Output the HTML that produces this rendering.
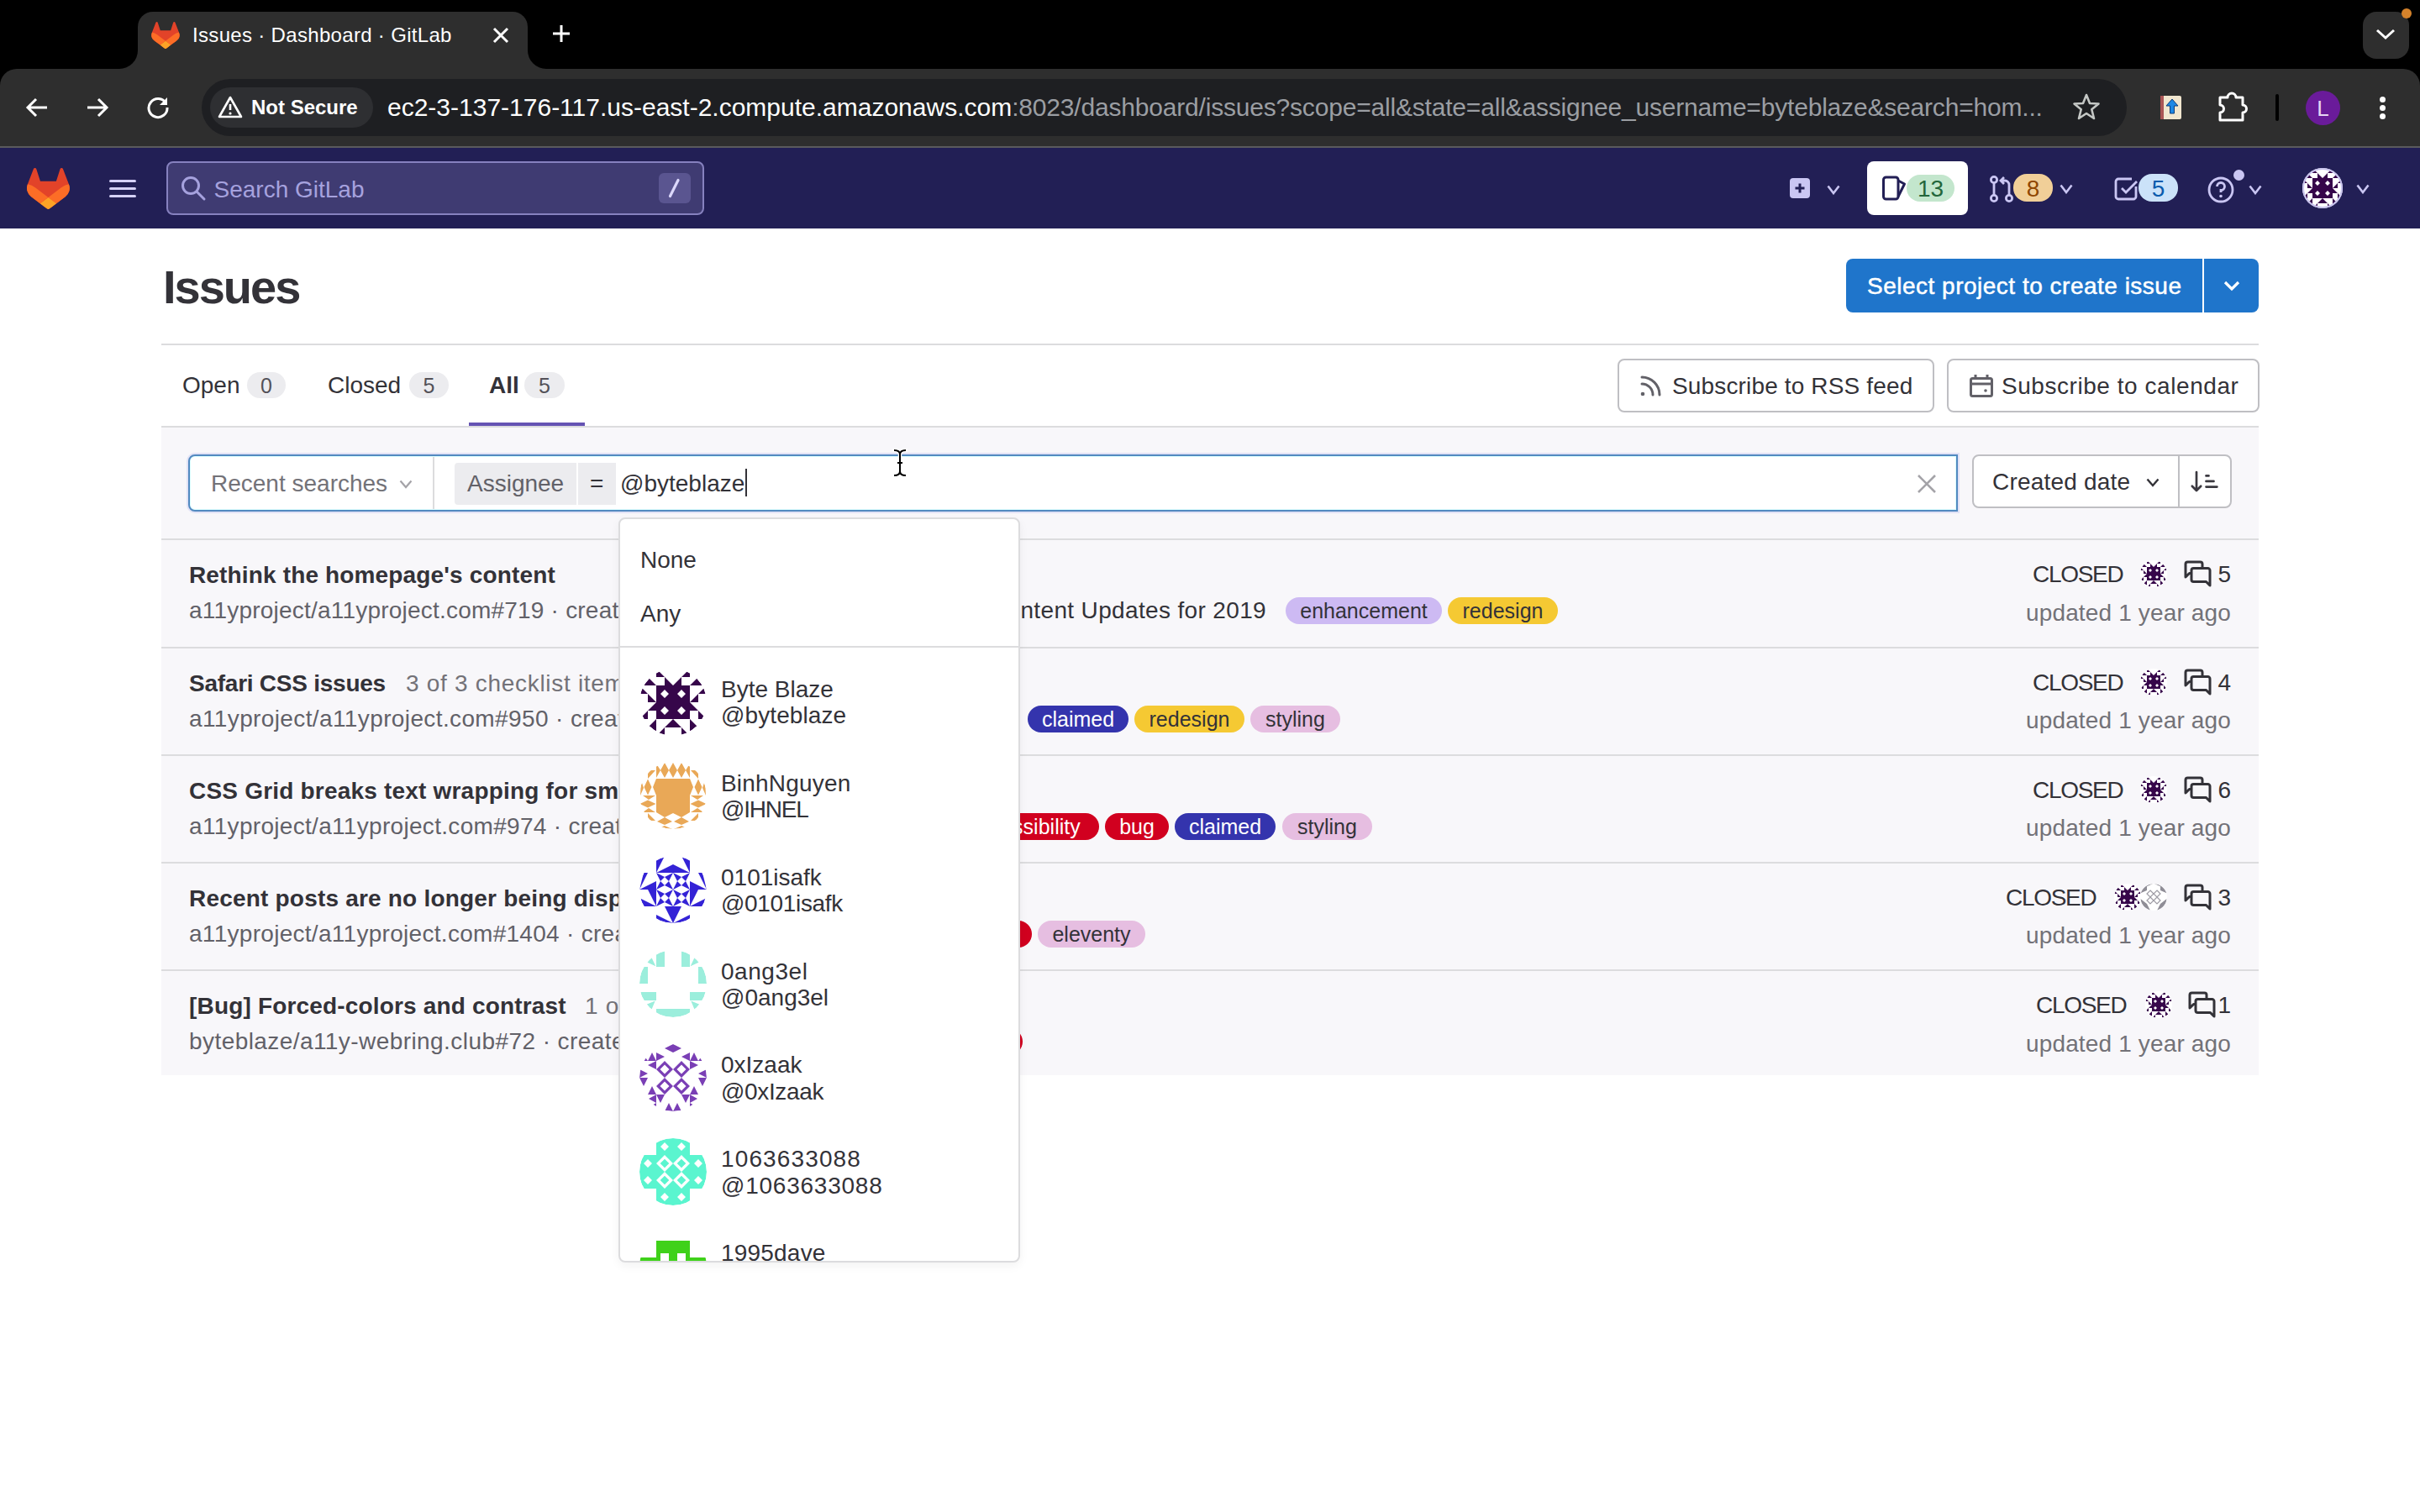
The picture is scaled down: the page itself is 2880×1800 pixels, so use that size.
<!DOCTYPE html>
<html><head><meta charset="utf-8"><title>Issues · Dashboard · GitLab</title>
<style>
html,body{margin:0;padding:0;width:2880px;height:1800px;overflow:hidden;background:#fff;position:relative;font-family:"Liberation Sans", sans-serif;}
.t{position:absolute;white-space:pre;line-height:1;font-family:"Liberation Sans", sans-serif;}
.r{position:absolute;box-sizing:border-box;}
</style></head><body>
<div class="r" style="left:0px;top:0px;width:2880px;height:110px;background:#000;"></div><div class="r" style="left:0px;top:82px;width:2880px;height:92px;background:#2e2e2e;border-radius:20px 20px 0 0;"></div><div class="r" style="left:164px;top:14px;width:464px;height:68px;background:#2e2e2e;border-radius:18px 18px 0 0;"></div><svg class="r" style="left:142px;top:60px;" width="22" height="22" viewBox="0 0 22 22"><path d="M22 0 V22 H0 A22 22 0 0 0 22 0Z" fill="#2e2e2e"/></svg><svg class="r" style="left:628px;top:60px;" width="22" height="22" viewBox="0 0 22 22"><path d="M0 0 V22 H22 A22 22 0 0 1 0 0Z" fill="#2e2e2e"/></svg><svg class="r" style="left:180px;top:26px;" width="34" height="32" viewBox="0 0 25 24"><path fill="#E24329" d="m24.507 9.5-.034-.09L21.082.562a.896.896 0 0 0-1.694.091l-2.29 7.01H7.825L5.535.653a.898.898 0 0 0-1.694-.09L.451 9.411.416 9.5a6.297 6.297 0 0 0 2.09 7.278l.012.01.03.022 5.16 3.867 2.56 1.935 1.554 1.176a1.051 1.051 0 0 0 1.268 0l1.555-1.176 2.56-1.935 5.197-3.89.014-.01A6.297 6.297 0 0 0 24.507 9.5Z"/><path fill="#FC6D26" d="m24.507 9.5-.034-.09a11.44 11.44 0 0 0-4.56 2.051l-7.447 5.632 4.742 3.584 5.197-3.89.014-.01A6.297 6.297 0 0 0 24.507 9.5Z"/><path fill="#FCA326" d="m7.707 20.677 2.56 1.935 1.555 1.176a1.051 1.051 0 0 0 1.268 0l1.555-1.176 2.56-1.935-4.743-3.584-4.755 3.584Z"/><path fill="#FC6D26" d="M5.01 11.461a11.43 11.43 0 0 0-4.56-2.05L.416 9.5a6.297 6.297 0 0 0 2.09 7.278l.012.01.03.022 5.16 3.867 4.745-3.584-7.444-5.632Z"/></svg><div class="t" style="left:229px;top:29.68px;font-size:24px;color:#ffffff;font-weight:400;letter-spacing:0.32px;">Issues · Dashboard · GitLab</div><svg class="r" style="left:586px;top:32px;" width="20" height="20" viewBox="0 0 20 20"><path d="M2 2 L18 18 M18 2 L2 18" stroke="#fff" stroke-width="3"/></svg><svg class="r" style="left:657px;top:29px;" width="22" height="22" viewBox="0 0 22 22"><path d="M11 1 V21 M1 11 H21" stroke="#fff" stroke-width="3"/></svg><div class="r" style="left:2812px;top:14px;width:55px;height:56px;background:#2e2e2e;border-radius:16px;"></div><svg class="r" style="left:2826px;top:32px;" width="26" height="16" viewBox="0 0 26 16"><path d="M3 4 L13 13 L23 4" stroke="#fff" stroke-width="3" fill="none"/></svg><div class="r" style="left:2858px;top:10px;width:12px;height:12px;border-radius:6px;background:#d4822b"></div><svg class="r" style="left:30px;top:114px;" width="28" height="28" viewBox="0 0 28 28"><path d="M26 14 H4 M13 4 L3 14 L13 24" stroke="#fff" stroke-width="3" fill="none"/></svg><svg class="r" style="left:102px;top:114px;" width="28" height="28" viewBox="0 0 28 28"><path d="M2 14 H24 M15 4 L25 14 L15 24" stroke="#fff" stroke-width="3" fill="none"/></svg><svg class="r" style="left:174px;top:114px;" width="28" height="28" viewBox="0 0 28 28"><path d="M23.5 9 A11 11 0 1 0 25 14" stroke="#fff" stroke-width="3" fill="none"/><path d="M25 2 V11 H16 Z" fill="#fff"/></svg><div class="r" style="left:240px;top:94px;width:2291px;height:68px;background:#1e1f22;border-radius:34px;"></div><div class="r" style="left:250px;top:104px;width:194px;height:48px;background:#2e2f32;border-radius:24px;"></div><svg class="r" style="left:259px;top:114px;" width="30" height="27" viewBox="0 0 30 27"><path d="M15 2 L28 25 H2 Z" stroke="#fff" stroke-width="2.6" fill="none" stroke-linejoin="round"/><path d="M15 10 V17" stroke="#fff" stroke-width="2.6"/><circle cx="15" cy="21" r="1.6" fill="#fff"/></svg><div class="t" style="left:299px;top:115.68px;font-size:24px;color:#ffffff;font-weight:700;">Not Secure</div><div class="t" style="left:461px;top:112.61px;font-size:30px;color:#ffffff;font-weight:400;">ec2-3-137-176-117.us-east-2.compute.amazonaws.com<span style="color:#9b9ea3;letter-spacing:-0.19px">:8023/dashboard/issues?scope=all&amp;state=all&amp;assignee_username=byteblaze&amp;search=hom...</span></div><svg class="r" style="left:2466px;top:110px;" width="34" height="34" viewBox="0 0 34 34"><path d="M17 3 L21 13 L31.5 13.5 L23.3 20.3 L26 31 L17 25 L8 31 L10.7 20.3 L2.5 13.5 L13 13 Z" stroke="#c4c7c5" stroke-width="2.6" fill="none" stroke-linejoin="round"/></svg><div class="r" style="left:2571px;top:114px;width:25px;height:28px;background:#f1e6cf;border-radius:2px;"></div><div class="r" style="left:2571px;top:114px;width:4px;height:28px;background:#a55;"></div><svg class="r" style="left:2575px;top:116px;" width="20" height="22" viewBox="0 0 20 22"><path d="M10 2 L17 10 H12.5 V19 H7.5 V10 H3 Z" fill="#1e88e5" stroke="#0d3c7a" stroke-width="1"/></svg><svg class="r" style="left:2638px;top:108px;" width="40" height="38" viewBox="0 0 40 38"><path d="M4 8 H13 A5 5 0 0 1 23 8 H31 V17 A4.5 4.5 0 0 1 31 26 V35 H4 V26 A4.5 4.5 0 0 0 4 17 Z" stroke="#fff" stroke-width="3" fill="none" stroke-linejoin="round"/></svg><div class="r" style="left:2708px;top:112px;width:4px;height:32px;background:#000;border-radius:2px;"></div><div class="r" style="left:2744px;top:108px;width:41px;height:41px;border-radius:50%;background:#6a1b9a"></div><div class="t" style="left:2764.5px;top:115.99px;font-size:26px;color:#e6d6f3;font-weight:400;transform:translateX(-50%);">L</div><div class="r" style="left:2832px;top:115px;width:7px;height:7px;border-radius:50%;background:#fff"></div><div class="r" style="left:2832px;top:125px;width:7px;height:7px;border-radius:50%;background:#fff"></div><div class="r" style="left:2832px;top:135px;width:7px;height:7px;border-radius:50%;background:#fff"></div><div class="r" style="left:0px;top:174px;width:2880px;height:2px;background:#5a5a5c;"></div><div class="r" style="left:0px;top:176px;width:2880px;height:96px;background:#221f55;"></div><svg class="r" style="left:32px;top:200px;" width="51" height="49" viewBox="0 0 25 24"><path fill="#E24329" d="m24.507 9.5-.034-.09L21.082.562a.896.896 0 0 0-1.694.091l-2.29 7.01H7.825L5.535.653a.898.898 0 0 0-1.694-.09L.451 9.411.416 9.5a6.297 6.297 0 0 0 2.09 7.278l.012.01.03.022 5.16 3.867 2.56 1.935 1.554 1.176a1.051 1.051 0 0 0 1.268 0l1.555-1.176 2.56-1.935 5.197-3.89.014-.01A6.297 6.297 0 0 0 24.507 9.5Z"/><path fill="#FC6D26" d="m24.507 9.5-.034-.09a11.44 11.44 0 0 0-4.56 2.051l-7.447 5.632 4.742 3.584 5.197-3.89.014-.01A6.297 6.297 0 0 0 24.507 9.5Z"/><path fill="#FCA326" d="m7.707 20.677 2.56 1.935 1.555 1.176a1.051 1.051 0 0 0 1.268 0l1.555-1.176 2.56-1.935-4.743-3.584-4.755 3.584Z"/><path fill="#FC6D26" d="M5.01 11.461a11.43 11.43 0 0 0-4.56-2.05L.416 9.5a6.297 6.297 0 0 0 2.09 7.278l.012.01.03.022 5.16 3.867 4.745-3.584-7.444-5.632Z"/></svg><div class="r" style="left:130px;top:214px;width:32px;height:3px;background:#d5d1f7;border-radius:2px;"></div><div class="r" style="left:130px;top:223px;width:32px;height:3px;background:#d5d1f7;border-radius:2px;"></div><div class="r" style="left:130px;top:232px;width:32px;height:3px;background:#d5d1f7;border-radius:2px;"></div><div class="r" style="left:198px;top:192px;width:640px;height:64px;background:#3f3b72;border:2px solid #8681bf;border-radius:8px;"></div><svg class="r" style="left:214px;top:208px;" width="32" height="32" viewBox="0 0 32 32"><circle cx="13" cy="13" r="9.5" stroke="#a6a2de" stroke-width="3" fill="none"/><path d="M20 20 L29 29" stroke="#a6a2de" stroke-width="3" stroke-linecap="round"/></svg><div class="t" style="left:254.5px;top:212.30px;font-size:28px;color:#a6a2de;font-weight:400;">Search GitLab</div><div class="r" style="left:784px;top:206px;width:38px;height:36px;background:#5a5590;border-radius:6px;"></div><svg class="r" style="left:790px;top:208px;" width="24" height="32" viewBox="0 0 24 32"><path d="M17 6.5 L7.5 25.5" stroke="#dcd8fb" stroke-width="3.2" stroke-linecap="round"/></svg><div class="r" style="left:2130px;top:212px;width:24px;height:24px;background:#cac6f3;border-radius:4px;"></div><svg class="r" style="left:2130px;top:212px;" width="24" height="24" viewBox="0 0 24 24"><path d="M12 6.5 V17.5 M6.5 12 H17.5" stroke="#221f55" stroke-width="3"/></svg><svg class="r" style="left:2174px;top:220px;" width="16" height="12" viewBox="0 0 16 12"><path d="M1.5 1.5 L8.0 10 L14.5 1.5" stroke="#cac6f3" stroke-width="2.6" fill="none"/></svg><div class="r" style="left:2222px;top:192px;width:120px;height:64px;background:#ffffff;border-radius:8px;"></div><svg class="r" style="left:2238px;top:208px;" width="32" height="32" viewBox="0 0 32 32"><rect x="3.5" y="3" width="17.5" height="26" rx="3" stroke="#221f55" stroke-width="3" fill="none"/><path d="M21 7 L28.5 11 L21 26" stroke="#221f55" stroke-width="3" fill="none" stroke-linejoin="round"/></svg><div class="r" style="left:2269px;top:208px;width:57px;height:32px;background:#c3e6cd;border-radius:16px;"></div><div class="t" style="left:2297.5px;top:211.30px;font-size:28px;color:#24663b;font-weight:400;transform:translateX(-50%);">13</div><svg class="r" style="left:2367px;top:209px;" width="34" height="32" viewBox="0 0 34 32"><circle cx="6" cy="5" r="3.6" stroke="#cac6f3" stroke-width="2.8" fill="none"/><circle cx="6" cy="27" r="3.6" stroke="#cac6f3" stroke-width="2.8" fill="none"/><path d="M6 9 V23" stroke="#cac6f3" stroke-width="2.8"/><circle cx="24" cy="27" r="3.6" stroke="#cac6f3" stroke-width="2.8" fill="none"/><path d="M24 23 V11 A5 5 0 0 0 19 6 H15 M18 2 L14 6 L18 10" stroke="#cac6f3" stroke-width="2.8" fill="none"/></svg><div class="r" style="left:2396px;top:207px;width:47px;height:33px;background:#f1cf98;border-radius:16px;"></div><div class="t" style="left:2419.5px;top:211.30px;font-size:28px;color:#8f4700;font-weight:400;transform:translateX(-50%);">8</div><svg class="r" style="left:2451px;top:219px;" width="16" height="12" viewBox="0 0 16 12"><path d="M1.5 1.5 L8.0 10 L14.5 1.5" stroke="#cac6f3" stroke-width="2.6" fill="none"/></svg><svg class="r" style="left:2515px;top:208px;" width="32" height="32" viewBox="0 0 32 32"><path d="M27 14 V26 A3 3 0 0 1 24 29 H6 A3 3 0 0 1 3 26 V8 A3 3 0 0 1 6 5 H22" stroke="#cac6f3" stroke-width="2.8" fill="none"/><path d="M10 16 L15 21 L28 8" stroke="#cac6f3" stroke-width="2.8" fill="none"/></svg><div class="r" style="left:2545px;top:207px;width:47px;height:33px;background:#cbe2f9;border-radius:16px;"></div><div class="t" style="left:2568.5px;top:211.30px;font-size:28px;color:#0b5cad;font-weight:400;transform:translateX(-50%);">5</div><svg class="r" style="left:2626px;top:208px;" width="36" height="34" viewBox="0 0 36 34"><circle cx="17" cy="18" r="14" stroke="#cac6f3" stroke-width="2.8" fill="none"/><path d="M12.5 14 A4.5 4.5 0 1 1 17 18.5 V21" stroke="#cac6f3" stroke-width="2.8" fill="none"/><circle cx="17" cy="25.5" r="1.8" fill="#cac6f3"/></svg><div class="r" style="left:2656px;top:200px;width:17px;height:17px;border-radius:50%;background:#cac6f3;border:2px solid #221f55"></div><svg class="r" style="left:2676px;top:220px;" width="16" height="12" viewBox="0 0 16 12"><path d="M1.5 1.5 L8.0 10 L14.5 1.5" stroke="#cac6f3" stroke-width="2.6" fill="none"/></svg><svg width="0" height="0" style="position:absolute"><defs>
<symbol id="bb" viewBox="0 0 80 80"><clipPath id="cc"><circle cx="40" cy="40" r="40"/></clipPath><g clip-path="url(#cc)" fill="#36064a">
<path d="M0 20 L10 10 L20 20Z M60 20 L70 10 L80 20Z"/>
<path d="M20 0 L30 10 L20 10Z M30 10 L40 20 L30 20Z M60 0 L50 10 L60 10Z M50 10 L40 20 L50 20Z"/>
<path d="M0 20 L10 30 L0 30Z M10 30 L20 40 L10 40Z M80 20 L70 30 L80 30Z M70 30 L60 40 L70 40Z"/>
<path d="M10 50 L0 60 L10 60Z M20 40 L10 50 L20 50Z M70 50 L80 60 L70 60Z M60 40 L70 50 L60 50Z"/>
<path fill-rule="evenodd" d="M20 20 H60 V60 H20Z M30 25 L35 30 L30 35 L25 30Z M50 25 L55 30 L50 35 L45 30Z M30 45 L35 50 L30 55 L25 50Z M50 45 L55 50 L50 55 L45 50Z"/>
<path d="M20 60 L10 70 L20 80Z M60 60 L70 70 L60 80Z"/>
<path d="M40 60 L30 70 L40 70Z M30 70 L20 80 L30 80Z M40 60 L50 70 L40 70Z M50 70 L60 80 L50 80Z"/>
</g></symbol>
</defs></svg><div class="r" style="left:2740px;top:200px;width:48px;height:48px;border-radius:50%;background:#fff;overflow:hidden;"><svg width="48" height="48" style="display:block"><use href="#bb"/></svg></div><div class="r" style="left:2740px;top:200px;width:48px;height:48px;border-radius:50%;border:2px solid #c9c4ee"></div><svg class="r" style="left:2804px;top:219px;" width="16" height="12" viewBox="0 0 16 12"><path d="M1.5 1.5 L8.0 10 L14.5 1.5" stroke="#cac6f3" stroke-width="2.6" fill="none"/></svg><div class="t" style="left:194px;top:313.60px;font-size:56px;color:#333238;font-weight:700;letter-spacing:-2px;">Issues</div><div class="r" style="left:2197px;top:308px;width:491px;height:64px;background:#1f75cb;border-radius:8px;"></div><div class="r" style="left:2621px;top:308px;width:2px;height:64px;background:#ffffff;"></div><div class="t" style="left:2222px;top:327.30px;font-size:28px;color:#ffffff;font-weight:400;letter-spacing:0.5px;-webkit-text-stroke:0.5px #fff;">Select project to create issue</div><svg class="r" style="left:2645px;top:333px;" width="22" height="14" viewBox="0 0 22 14"><path d="M3 3 L11 11 L19 3" stroke="#fff" stroke-width="3.2" fill="none"/></svg><div class="r" style="left:192px;top:409px;width:2496px;height:2px;background:#dcdcde;"></div><div class="t" style="left:217px;top:445.30px;font-size:28px;color:#333238;font-weight:400;">Open</div><div class="r" style="left:294px;top:443px;width:46px;height:31px;background:#ececef;border-radius:16px;"></div><div class="t" style="left:317px;top:446.84px;font-size:25px;color:#535158;font-weight:400;transform:translateX(-50%);">0</div><div class="t" style="left:390px;top:445.30px;font-size:28px;color:#333238;font-weight:400;">Closed</div><div class="r" style="left:487px;top:443px;width:47px;height:31px;background:#ececef;border-radius:16px;"></div><div class="t" style="left:510.5px;top:446.84px;font-size:25px;color:#535158;font-weight:400;transform:translateX(-50%);">5</div><div class="t" style="left:582px;top:445.30px;font-size:28px;color:#333238;font-weight:700;">All</div><div class="r" style="left:624px;top:443px;width:48px;height:31px;background:#ececef;border-radius:16px;"></div><div class="t" style="left:648px;top:446.84px;font-size:25px;color:#535158;font-weight:400;transform:translateX(-50%);">5</div><div class="r" style="left:558px;top:503px;width:138px;height:4px;background:#6553b3;"></div><div class="r" style="left:192px;top:507px;width:2496px;height:2px;background:#dcdcde;"></div><div class="r" style="left:1925px;top:427px;width:377px;height:64px;background:#ffffff;border:2px solid #bfbfc3;border-radius:8px;"></div><svg class="r" style="left:1950px;top:444px;" width="30" height="30" viewBox="0 0 30 30"><path d="M4 5 A21 21 0 0 1 25 26" stroke="#626168" stroke-width="3" fill="none" stroke-linecap="round"/><path d="M4 13 A13 13 0 0 1 17 26" stroke="#626168" stroke-width="3" fill="none" stroke-linecap="round"/><circle cx="5" cy="25" r="2.3" fill="#626168"/></svg><div class="t" style="left:1990px;top:446.30px;font-size:28px;color:#333238;font-weight:400;letter-spacing:0.15px;">Subscribe to RSS feed</div><div class="r" style="left:2317px;top:427px;width:372px;height:64px;background:#ffffff;border:2px solid #bfbfc3;border-radius:8px;"></div><svg class="r" style="left:2342px;top:444px;" width="32" height="32" viewBox="0 0 32 32"><rect x="3.5" y="6.5" width="25" height="21" rx="2" stroke="#626168" stroke-width="3" fill="none"/><path d="M3.5 13 H28.5" stroke="#626168" stroke-width="3"/><path d="M9 2 V8 M23 2 V8" stroke="#626168" stroke-width="3"/><circle cx="21" cy="21" r="1.8" fill="#626168"/></svg><div class="t" style="left:2382px;top:446.30px;font-size:28px;color:#333238;font-weight:400;letter-spacing:0.55px;">Subscribe to calendar</div><div class="r" style="left:192px;top:509px;width:2496px;height:771px;background:#f8f7fa;"></div><div class="r" style="left:192px;top:641px;width:2496px;height:2px;background:#dcdcde;"></div><div class="r" style="left:224px;top:541px;width:2106px;height:68px;background:#ffffff;border:2px solid #5289c0;border-radius:8px 0 0 8px;box-shadow:0 0 0 2px rgba(205,210,242,0.55), inset 0 0 0 1px rgba(215,255,255,0.9);"></div><div class="r" style="left:515px;top:544px;width:2px;height:62px;background:#dcdcde;"></div><div class="t" style="left:251px;top:561.80px;font-size:28px;color:#737278;font-weight:400;">Recent searches</div><svg class="r" style="left:475px;top:571px;" width="16" height="11" viewBox="0 0 16 11"><path d="M1.5 1.5 L8.0 9 L14.5 1.5" stroke="#a4a3a8" stroke-width="2.2" fill="none"/></svg><div class="r" style="left:541px;top:551px;width:145px;height:50px;background:#ececef;border-radius:4px 0 0 4px;"></div><div class="t" style="left:556px;top:561.80px;font-size:28px;color:#626168;font-weight:400;">Assignee</div><div class="r" style="left:688px;top:551px;width:45px;height:50px;background:#ececef;"></div><div class="t" style="left:702px;top:561.80px;font-size:28px;color:#333238;font-weight:400;">=</div><div class="t" style="left:738px;top:561.80px;font-size:28px;color:#333238;font-weight:400;">@byteblaze</div><div class="r" style="left:887px;top:558px;width:2px;height:33px;background:#333238;"></div><svg class="r" style="left:2280px;top:563px;" width="26" height="26" viewBox="0 0 26 26"><path d="M3 3 L23 23 M23 3 L3 23" stroke="#a4a3a8" stroke-width="2.6"/></svg><div class="r" style="left:2347px;top:541px;width:309px;height:64px;background:#ffffff;border:2px solid #bfbfc3;border-radius:8px;"></div><div class="r" style="left:2592px;top:543px;width:2px;height:60px;background:#bfbfc3;"></div><div class="t" style="left:2371px;top:560.30px;font-size:28px;color:#333238;font-weight:400;letter-spacing:0.2px;">Created date</div><svg class="r" style="left:2554px;top:569px;" width="16" height="11" viewBox="0 0 16 11"><path d="M1.5 1.5 L8.0 9 L14.5 1.5" stroke="#333238" stroke-width="2.4" fill="none"/></svg><svg class="r" style="left:2600px;top:556px;" width="44" height="34" viewBox="0 0 44 34"><g stroke="#3a383f" stroke-width="2.7" fill="none" stroke-linecap="round" stroke-linejoin="round"><path d="M14 6 V27.5 M8.8 22.8 L14 28 L19.2 22.8"/><path d="M25.5 10.4 H28.5 M25.5 16.9 H34.5 M25.5 23.6 H38.4"/></g></svg><div class="r" style="left:192px;top:769.5px;width:2496px;height:2.0px;background:#dcdcde;"></div><div class="r" style="left:192px;top:897.5px;width:2496px;height:2.0px;background:#dcdcde;"></div><div class="r" style="left:192px;top:1025.5px;width:2496px;height:2.0px;background:#dcdcde;"></div><div class="r" style="left:192px;top:1154px;width:2496px;height:2px;background:#dcdcde;"></div><div class="t" style="left:225px;top:671.30px;font-size:28px;color:#333238;font-weight:700;letter-spacing:0.15px;">Rethink the homepage&#39;s content</div><div class="t" style="left:225px;top:713.30px;font-size:28px;color:#626168;font-weight:400;letter-spacing:0.21px;">a11yproject/a11yproject.com#719 · created 1 year ago by Byte Blaze</div><div class="t" style="left:225px;top:799.80px;font-size:28px;color:#333238;font-weight:700;letter-spacing:-0.25px;">Safari CSS issues</div><div class="t" style="left:483px;top:799.80px;font-size:28px;color:#737278;font-weight:400;letter-spacing:0.7px;">3 of 3 checklist items completed</div><div class="t" style="left:225px;top:841.80px;font-size:28px;color:#626168;font-weight:400;letter-spacing:0.38px;">a11yproject/a11yproject.com#950 · created 1 year ago by Byte Blaze</div><div class="t" style="left:225px;top:927.80px;font-size:28px;color:#333238;font-weight:700;letter-spacing:0.2px;">CSS Grid breaks text wrapping for small screens</div><div class="t" style="left:225px;top:969.80px;font-size:28px;color:#626168;font-weight:400;letter-spacing:0.31px;">a11yproject/a11yproject.com#974 · created 1 year ago by Byte Blaze</div><div class="t" style="left:225px;top:1055.80px;font-size:28px;color:#333238;font-weight:700;letter-spacing:0.2px;">Recent posts are no longer being displayed</div><div class="t" style="left:225px;top:1097.80px;font-size:28px;color:#626168;font-weight:400;letter-spacing:0.29px;">a11yproject/a11yproject.com#1404 · created 1 year ago by Byte Blaze</div><div class="t" style="left:225px;top:1184.30px;font-size:28px;color:#333238;font-weight:700;letter-spacing:0.17px;">[Bug] Forced-colors and contrast</div><div class="t" style="left:696px;top:1184.30px;font-size:28px;color:#737278;font-weight:400;letter-spacing:0.7px;">1 of 3 checklist items completed</div><div class="t" style="left:225px;top:1226.30px;font-size:28px;color:#626168;font-weight:400;letter-spacing:0.43px;">byteblaze/a11y-webring.club#72 · created 1 year ago by Byte Blaze</div><div class="t" style="right:1373px;top:713.30px;font-size:28px;color:#333238;font-weight:400;letter-spacing:0.35px;">Content Updates for 2019</div><div class="r" style="left:1530px;top:711px;width:186px;height:32px;border-radius:16px;background:#cdbaf3;"></div><div class="t" style="left:1623.0px;top:715.34px;font-size:25px;color:#333238;font-weight:400;transform:translateX(-50%);">enhancement</div><div class="r" style="left:1723px;top:711px;width:131px;height:32px;border-radius:16px;background:#f5c933;"></div><div class="t" style="left:1788.5px;top:715.34px;font-size:25px;color:#333238;font-weight:400;transform:translateX(-50%);">redesign</div><div class="r" style="left:1223px;top:839.5px;width:120px;height:32px;border-radius:16px;background:#3434ad;"></div><div class="t" style="left:1283.0px;top:843.84px;font-size:25px;color:#ffffff;font-weight:400;transform:translateX(-50%);">claimed</div><div class="r" style="left:1350px;top:839.5px;width:131px;height:32px;border-radius:16px;background:#f5c933;"></div><div class="t" style="left:1415.5px;top:843.84px;font-size:25px;color:#333238;font-weight:400;transform:translateX(-50%);">redesign</div><div class="r" style="left:1488px;top:839.5px;width:107px;height:32px;border-radius:16px;background:#e6bee1;"></div><div class="t" style="left:1541.5px;top:843.84px;font-size:25px;color:#333238;font-weight:400;transform:translateX(-50%);">styling</div><div class="r" style="left:1130px;top:967.5px;width:178px;height:32px;border-radius:16px;background:#d1001f;"></div><div class="t" style="left:1219.0px;top:971.84px;font-size:25px;color:#ffffff;font-weight:400;transform:translateX(-50%);">accessibility</div><div class="r" style="left:1315px;top:967.5px;width:76px;height:32px;border-radius:16px;background:#d1001f;"></div><div class="t" style="left:1353.0px;top:971.84px;font-size:25px;color:#ffffff;font-weight:400;transform:translateX(-50%);">bug</div><div class="r" style="left:1398px;top:967.5px;width:120px;height:32px;border-radius:16px;background:#3434ad;"></div><div class="t" style="left:1458.0px;top:971.84px;font-size:25px;color:#ffffff;font-weight:400;transform:translateX(-50%);">claimed</div><div class="r" style="left:1526px;top:967.5px;width:107px;height:32px;border-radius:16px;background:#e6bee1;"></div><div class="t" style="left:1579.5px;top:971.84px;font-size:25px;color:#333238;font-weight:400;transform:translateX(-50%);">styling</div><div class="r" style="left:1100px;top:1095.5px;width:128px;height:32px;border-radius:16px;background:#d1001f;"></div><div class="t" style="left:1164.0px;top:1099.84px;font-size:25px;color:#ffffff;font-weight:400;transform:translateX(-50%);">bug</div><div class="r" style="left:1235px;top:1095.5px;width:128px;height:32px;border-radius:16px;background:#e6bee1;"></div><div class="t" style="left:1299.0px;top:1099.84px;font-size:25px;color:#333238;font-weight:400;transform:translateX(-50%);">eleventy</div><div class="r" style="left:1100px;top:1224px;width:117px;height:32px;border-radius:16px;background:#d1001f;"></div><div class="t" style="left:1158.5px;top:1228.34px;font-size:25px;color:#ffffff;font-weight:400;transform:translateX(-50%);">bug</div><div class="t" style="left:2419px;top:670.30px;font-size:28px;color:#333238;font-weight:400;letter-spacing:-1.3px;">CLOSED</div><div class="r" style="left:2547px;top:667px;width:32px;height:32px;border-radius:50%;background:#fff;overflow:hidden;"><svg width="32" height="32" style="display:block"><use href="#bb"/></svg></div><svg class="r" style="left:2599px;top:667px;" width="34" height="32" viewBox="0 0 34 32"><path d="M22 9 V4.5 A2.5 2.5 0 0 0 19.5 2 H4.5 A2.5 2.5 0 0 0 2 4.5 V20 L6.5 15.5 H9" stroke="#333238" stroke-width="3" fill="none" stroke-linejoin="round"/><path d="M11.5 9.5 H28.5 A2.5 2.5 0 0 1 31 12 V30 L26.5 25.5 H11.5 A2.5 2.5 0 0 1 9 23 V12 A2.5 2.5 0 0 1 11.5 9.5Z" stroke="#333238" stroke-width="3" fill="none" stroke-linejoin="round"/></svg><div class="t" style="right:225px;top:670.30px;font-size:28px;color:#333238;font-weight:400;">5</div><div class="t" style="right:225px;top:715.80px;font-size:28px;color:#737278;font-weight:400;letter-spacing:0.15px;">updated 1 year ago</div><div class="t" style="left:2419px;top:798.80px;font-size:28px;color:#333238;font-weight:400;letter-spacing:-1.3px;">CLOSED</div><div class="r" style="left:2547px;top:795.5px;width:32px;height:32px;border-radius:50%;background:#fff;overflow:hidden;"><svg width="32" height="32" style="display:block"><use href="#bb"/></svg></div><svg class="r" style="left:2599px;top:795.5px;" width="34" height="32" viewBox="0 0 34 32"><path d="M22 9 V4.5 A2.5 2.5 0 0 0 19.5 2 H4.5 A2.5 2.5 0 0 0 2 4.5 V20 L6.5 15.5 H9" stroke="#333238" stroke-width="3" fill="none" stroke-linejoin="round"/><path d="M11.5 9.5 H28.5 A2.5 2.5 0 0 1 31 12 V30 L26.5 25.5 H11.5 A2.5 2.5 0 0 1 9 23 V12 A2.5 2.5 0 0 1 11.5 9.5Z" stroke="#333238" stroke-width="3" fill="none" stroke-linejoin="round"/></svg><div class="t" style="right:225px;top:798.80px;font-size:28px;color:#333238;font-weight:400;">4</div><div class="t" style="right:225px;top:844.30px;font-size:28px;color:#737278;font-weight:400;letter-spacing:0.15px;">updated 1 year ago</div><div class="t" style="left:2419px;top:926.80px;font-size:28px;color:#333238;font-weight:400;letter-spacing:-1.3px;">CLOSED</div><div class="r" style="left:2547px;top:923.5px;width:32px;height:32px;border-radius:50%;background:#fff;overflow:hidden;"><svg width="32" height="32" style="display:block"><use href="#bb"/></svg></div><svg class="r" style="left:2599px;top:923.5px;" width="34" height="32" viewBox="0 0 34 32"><path d="M22 9 V4.5 A2.5 2.5 0 0 0 19.5 2 H4.5 A2.5 2.5 0 0 0 2 4.5 V20 L6.5 15.5 H9" stroke="#333238" stroke-width="3" fill="none" stroke-linejoin="round"/><path d="M11.5 9.5 H28.5 A2.5 2.5 0 0 1 31 12 V30 L26.5 25.5 H11.5 A2.5 2.5 0 0 1 9 23 V12 A2.5 2.5 0 0 1 11.5 9.5Z" stroke="#333238" stroke-width="3" fill="none" stroke-linejoin="round"/></svg><div class="t" style="right:225px;top:926.80px;font-size:28px;color:#333238;font-weight:400;">6</div><div class="t" style="right:225px;top:972.30px;font-size:28px;color:#737278;font-weight:400;letter-spacing:0.15px;">updated 1 year ago</div><div class="t" style="left:2387px;top:1054.80px;font-size:28px;color:#333238;font-weight:400;letter-spacing:-1.3px;">CLOSED</div><div class="r" style="left:2516px;top:1051.5px;width:32px;height:32px;border-radius:50%;background:#fff;overflow:hidden;"><svg width="32" height="32" style="display:block"><use href="#bb"/></svg></div><div class="r" style="left:2547px;top:1051.5px;width:32px;height:32px;border-radius:50%;background:#fff;overflow:hidden"><svg width="32" height="32" viewBox="0 0 80 80" style="display:block"><path fill="#8f8d96" d="M1 28 L20 20 L20 8 L38 0 A40 40 0 0 0 1 28Z M42 0 L60 8 L60 20 L79 28 A40 40 0 0 0 42 0Z M1 45 L20 60 L30 80 A40 40 0 0 1 1 45Z M79 45 L60 60 L50 80 A40 40 0 0 0 79 45Z"/><path fill="none" stroke="#9d9ba4" stroke-width="3" d="M30 20 L40 30 L30 40 L20 30Z M50 20 L60 30 L50 40 L40 30Z M30 40 L40 50 L30 60 L20 50Z M50 40 L60 50 L50 60 L40 50Z"/></svg></div><svg class="r" style="left:2599px;top:1051.5px;" width="34" height="32" viewBox="0 0 34 32"><path d="M22 9 V4.5 A2.5 2.5 0 0 0 19.5 2 H4.5 A2.5 2.5 0 0 0 2 4.5 V20 L6.5 15.5 H9" stroke="#333238" stroke-width="3" fill="none" stroke-linejoin="round"/><path d="M11.5 9.5 H28.5 A2.5 2.5 0 0 1 31 12 V30 L26.5 25.5 H11.5 A2.5 2.5 0 0 1 9 23 V12 A2.5 2.5 0 0 1 11.5 9.5Z" stroke="#333238" stroke-width="3" fill="none" stroke-linejoin="round"/></svg><div class="t" style="right:225px;top:1054.80px;font-size:28px;color:#333238;font-weight:400;">3</div><div class="t" style="right:225px;top:1100.30px;font-size:28px;color:#737278;font-weight:400;letter-spacing:0.15px;">updated 1 year ago</div><div class="t" style="left:2423px;top:1183.30px;font-size:28px;color:#333238;font-weight:400;letter-spacing:-1.3px;">CLOSED</div><div class="r" style="left:2553px;top:1180px;width:32px;height:32px;border-radius:50%;background:#fff;overflow:hidden;"><svg width="32" height="32" style="display:block"><use href="#bb"/></svg></div><svg class="r" style="left:2604px;top:1180px;" width="34" height="32" viewBox="0 0 34 32"><path d="M22 9 V4.5 A2.5 2.5 0 0 0 19.5 2 H4.5 A2.5 2.5 0 0 0 2 4.5 V20 L6.5 15.5 H9" stroke="#333238" stroke-width="3" fill="none" stroke-linejoin="round"/><path d="M11.5 9.5 H28.5 A2.5 2.5 0 0 1 31 12 V30 L26.5 25.5 H11.5 A2.5 2.5 0 0 1 9 23 V12 A2.5 2.5 0 0 1 11.5 9.5Z" stroke="#333238" stroke-width="3" fill="none" stroke-linejoin="round"/></svg><div class="t" style="right:225px;top:1183.30px;font-size:28px;color:#333238;font-weight:400;">1</div><div class="t" style="right:225px;top:1228.80px;font-size:28px;color:#737278;font-weight:400;letter-spacing:0.15px;">updated 1 year ago</div><div class="r" style="left:736px;top:616px;width:478px;height:887px;background:#fff;border:2px solid #dcdcde;border-radius:8px;box-shadow:0 4px 12px rgba(5,5,6,0.05);overflow:hidden;"><div class="t" style="left:24px;top:34.80px;font-size:28px;color:#333238;letter-spacing:0px">None</div><div class="t" style="left:24px;top:98.80px;font-size:28px;color:#333238;letter-spacing:0px">Any</div><div class="r" style="left:0;top:151px;width:476px;height:2px;background:#dcdcde"></div><div class="r" style="left:23px;top:177.5px;width:80px;height:80px;border-radius:50%;overflow:hidden;background:#fff"><svg width="80" height="80" style="display:block"><use href="#av0"/></svg></div><div class="t" style="left:120px;top:188.80px;font-size:28px;color:#333238;letter-spacing:0px">Byte Blaze</div><div class="t" style="left:120px;top:220.30px;font-size:28px;color:#333238;letter-spacing:0.1px">@byteblaze</div><div class="r" style="left:23px;top:289.4px;width:80px;height:80px;border-radius:50%;overflow:hidden;background:#fff"><svg width="80" height="80" style="display:block"><use href="#av1"/></svg></div><div class="t" style="left:120px;top:300.70px;font-size:28px;color:#333238;letter-spacing:0.19px">BinhNguyen</div><div class="t" style="left:120px;top:332.20px;font-size:28px;color:#333238;letter-spacing:-1.2px">@IHNEL</div><div class="r" style="left:23px;top:401.3px;width:80px;height:80px;border-radius:50%;overflow:hidden;background:#fff"><svg width="80" height="80" style="display:block"><use href="#av2"/></svg></div><div class="t" style="left:120px;top:412.60px;font-size:28px;color:#333238;letter-spacing:0px">0101isafk</div><div class="t" style="left:120px;top:444.10px;font-size:28px;color:#333238;letter-spacing:-0.33px">@0101isafk</div><div class="r" style="left:23px;top:513.2px;width:80px;height:80px;border-radius:50%;overflow:hidden;background:#fff"><svg width="80" height="80" style="display:block"><use href="#av3"/></svg></div><div class="t" style="left:120px;top:524.50px;font-size:28px;color:#333238;letter-spacing:0.54px">0ang3el</div><div class="t" style="left:120px;top:556.00px;font-size:28px;color:#333238;letter-spacing:0px">@0ang3el</div><div class="r" style="left:23px;top:625.1px;width:80px;height:80px;border-radius:50%;overflow:hidden;background:#fff"><svg width="80" height="80" style="display:block"><use href="#av4"/></svg></div><div class="t" style="left:120px;top:636.40px;font-size:28px;color:#333238;letter-spacing:0px">0xIzaak</div><div class="t" style="left:120px;top:667.90px;font-size:28px;color:#333238;letter-spacing:-0.36px">@0xIzaak</div><div class="r" style="left:23px;top:737.0px;width:80px;height:80px;border-radius:50%;overflow:hidden;background:#fff"><svg width="80" height="80" style="display:block"><use href="#av5"/></svg></div><div class="t" style="left:120px;top:748.30px;font-size:28px;color:#333238;letter-spacing:1.13px">1063633088</div><div class="t" style="left:120px;top:779.80px;font-size:28px;color:#333238;letter-spacing:0.76px">@1063633088</div><div class="r" style="left:23px;top:848.9px;width:80px;height:80px;border-radius:50%;overflow:hidden;background:#fff"><svg width="80" height="80" style="display:block"><use href="#av6"/></svg></div><div class="t" style="left:120px;top:860.20px;font-size:28px;color:#333238;letter-spacing:0.2px">1995dave</div><div class="t" style="left:120px;top:891.70px;font-size:28px;color:#333238;letter-spacing:0px">@1995dave</div></div><svg width="0" height="0" style="position:absolute"><defs><symbol id="av0" viewBox="0 0 80 80"><use href="#bb"/></symbol><symbol id="av1" viewBox="0 0 80 80"><clipPath id="c1"><circle cx="40" cy="40" r="40"/></clipPath><g clip-path="url(#c1)"><path d="M20 20 L60 20 L60 20 L64 30 L60 40 L60 60 L50 66 L40 61 L30 66 L20 60 L20 40 L16 30 L20 20ZM30 5 L35 10 L30 15 L25 10ZM30 1 L35 10 L30 19 L25 10ZM40 1 L45 10 L40 19 L35 10ZM50 1 L55 10 L50 19 L45 10ZM20 2 L25 10 L20 19ZM60 2 L55 10 L60 19ZM5.5 30 L10 20.5 L14.5 30 L10 39.5ZM74.5 30 L70 20.5 L65.5 30 L70 39.5ZM1 40 L2 22 L5 31ZM79 40 L78 22 L75 31ZM0.5 50 L10 45.5 L19.5 50 L10 54.5ZM79.5 50 L70 45.5 L60.5 50 L70 54.5ZM4 40 L19 40 L11 45ZM76 40 L61 40 L69 45ZM4 60 L19 60 L11 55ZM76 60 L61 60 L69 55ZM10 10 L19 10 L10 20ZM70 10 L61 10 L70 20ZM10 61 L19 70 L10 70ZM70 61 L61 70 L70 70ZM30 66 L39 71 L30 75 L21 71ZM50 66 L41 71 L50 75 L59 71ZM30 76 L39 80 L21 80ZM50 76 L41 80 L59 80Z" fill="#e9a857"/></g></symbol><symbol id="av2" viewBox="0 0 80 80"><clipPath id="c2"><circle cx="40" cy="40" r="40"/></clipPath><g clip-path="url(#c2)"><path d="M20 0 L30 0 L20 20ZM60 0 L50 0 L60 20ZM20 20 L40 10 L40 20ZM60 20 L40 10 L40 20ZM5 20 L10 20 L0 40ZM75 20 L70 20 L80 40ZM0 40 L20 30 L20 60 L10 40ZM80 40 L60 30 L60 60 L70 40ZM0 50 L20 60 L5 60ZM80 50 L60 60 L75 60ZM30 60 L40 60 L40 80ZM50 60 L40 60 L40 80ZM20 70 L40 80 L20 80ZM60 70 L40 80 L60 80ZM20 20 L30 25 L25 30ZM40 20 L30 25 L35 30ZM20 40 L30 35 L25 30ZM40 40 L30 35 L35 30ZM20 40 L30 45 L25 50ZM40 40 L30 45 L35 50ZM20 60 L30 55 L25 50ZM40 60 L30 55 L35 50ZM40 20 L50 25 L45 30ZM60 20 L50 25 L55 30ZM40 40 L50 35 L45 30ZM60 40 L50 35 L55 30ZM40 40 L50 45 L45 50ZM60 40 L50 45 L55 50ZM40 60 L50 55 L45 50ZM60 60 L50 55 L55 50Z" fill="#3423d6"/></g></symbol><symbol id="av3" viewBox="0 0 80 80"><clipPath id="c3"><circle cx="40" cy="40" r="40"/></clipPath><g clip-path="url(#c3)"><path d="M20 0 L30 0 L30 20 L20 20ZM50 0 L60 0 L60 20 L50 20ZM9 14.5 L14.5 9 L19.3 19.3ZM71 14.5 L65.5 9 L60.7 19.3ZM0 20 L10 20 L10 40 L0 40ZM80 20 L70 20 L70 40 L80 40ZM0 50 L20 50 L20 60 L0 60ZM80 50 L60 50 L60 60 L80 60ZM8.5 64.7 L18.7 60.5 L14.5 70.7ZM71.5 64.7 L61.3 60.5 L65.5 70.7ZM20 70 L60 70 L60 80 L20 80Z" fill="#9beedc"/></g></symbol><symbol id="av4" viewBox="0 0 80 80"><clipPath id="c4"><circle cx="40" cy="40" r="40"/></clipPath><g clip-path="url(#c4)"><path d="M30 5 L40 0 L40 10ZM50 5 L40 0 L40 10ZM20 10 L30 15 L20 20ZM60 10 L50 15 L60 20ZM10 20 L15 10 L20 20ZM70 20 L65 10 L60 20ZM5 20 L7.5 16.5 L10 20ZM75 20 L72.5 16.5 L70 20ZM10 25 L20 20 L20 30ZM70 25 L60 20 L60 30ZM0 30 L10 35 L0 40ZM80 30 L70 35 L80 40ZM0 40 L10 40 L5 50ZM80 40 L70 40 L75 50ZM10 60 L15 50 L20 60ZM70 60 L65 50 L60 60ZM11 65 L20 60 L20 70ZM69 65 L60 60 L60 70ZM20 60 L30 60 L25 70ZM60 60 L50 60 L55 70ZM16.5 72 L20 70 L20 74ZM63.5 72 L60 70 L60 74ZM30 80 L35 70 L40 80ZM50 80 L45 70 L40 80Z" fill="#7a3fb5"/><path d="M30 20 L40 30 L30 40 L20 30ZM30 24.5 L35.5 30 L30 35.5 L24.5 30ZM50 20 L60 30 L50 40 L40 30ZM50 24.5 L55.5 30 L50 35.5 L44.5 30ZM30 40 L40 50 L30 60 L20 50ZM30 44.5 L35.5 50 L30 55.5 L24.5 50ZM50 40 L60 50 L50 60 L40 50ZM50 44.5 L55.5 50 L50 55.5 L44.5 50Z" fill="#7a3fb5" fill-rule="evenodd"/></g></symbol><symbol id="av5" viewBox="0 0 80 80"><clipPath id="c5"><circle cx="40" cy="40" r="40"/></clipPath><g clip-path="url(#c5)"><path d="M20 0 L60 0 L60 20 L80 20 L80 60 L60 60 L60 80 L20 80 L20 60 L0 60 L0 20 L20 20ZM30 5 L35 10 L30 15 L25 10ZM50 5 L55 10 L50 15 L45 10ZM10 25 L15 30 L10 35 L5 30ZM70 25 L75 30 L70 35 L65 30ZM10 45 L15 50 L10 55 L5 50ZM70 45 L75 50 L70 55 L65 50ZM30 65 L35 70 L30 75 L25 70ZM50 65 L55 70 L50 75 L45 70ZM30 20 L40 30 L30 40 L20 30ZM30 24.7 L35.3 30 L30 35.3 L24.7 30ZM50 20 L60 30 L50 40 L40 30ZM50 24.7 L55.3 30 L50 35.3 L44.7 30ZM30 40 L40 50 L30 60 L20 50ZM30 44.7 L35.3 50 L30 55.3 L24.7 50ZM50 40 L60 50 L50 60 L40 50ZM50 44.7 L55.3 50 L50 55.3 L44.7 50Z" fill="#5af5cf" fill-rule="evenodd"/></g></symbol><symbol id="av6" viewBox="0 0 80 80"><clipPath id="c6"><circle cx="40" cy="40" r="40"/></clipPath><g clip-path="url(#c6)"><path d="M20 10 L60 10 L60 30 L80 30 L80 80 L0 80 L0 30 L20 30ZM25 25 L35 25 L35 35 L25 35ZM45 25 L55 25 L55 35 L45 35Z" fill="#3fd11a" fill-rule="evenodd"/></g></symbol></defs></svg><svg class="r" style="left:1062px;top:533px;" width="18" height="36" viewBox="0 0 18 36"><g stroke="#fff" stroke-width="4.5" fill="none" stroke-linecap="round"><path d="M2 3 C6 3 9 4 9 8 C9 4 12 3 16 3"/><path d="M9 8 V28"/><path d="M2 33 C6 33 9 32 9 28 C9 32 12 33 16 33"/></g><g stroke="#000" stroke-width="2" fill="none"><path d="M2 3 C6 3 9 4 9 8 C9 4 12 3 16 3"/><path d="M9 8 V28"/><path d="M6 18 H12"/><path d="M2 33 C6 33 9 32 9 28 C9 32 12 33 16 33"/></g></svg>
</body></html>
